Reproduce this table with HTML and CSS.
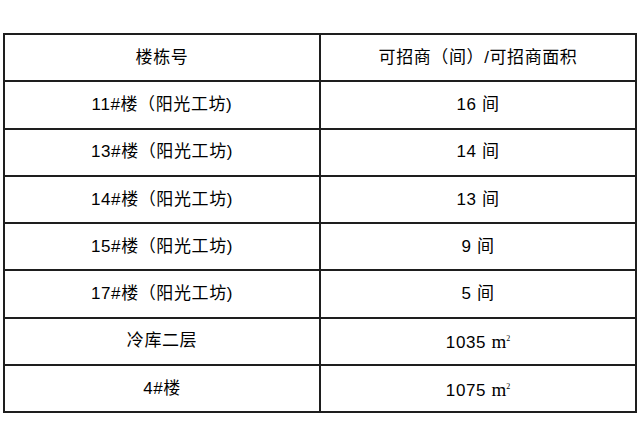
FILE: index.html
```html
<!DOCTYPE html>
<html lang="zh">
<head>
<meta charset="utf-8">
<link rel="stylesheet" href="styles.css">
</head>
<body>
<table class="grid">
  <tr><td>楼栋号</td><td>可招商（间）/可招商面积</td></tr>
  <tr><td>11#楼（阳光工坊)</td><td>16 间</td></tr>
  <tr><td>13#楼（阳光工坊)</td><td>14 间</td></tr>
  <tr><td>14#楼（阳光工坊)</td><td>13 间</td></tr>
  <tr><td>15#楼（阳光工坊)</td><td>9 间</td></tr>
  <tr><td>17#楼（阳光工坊)</td><td>5 间</td></tr>
  <tr><td>冷库二层</td><td>1035 <span class="unit">m<sup>2</sup></span></td></tr>
  <tr><td>4#楼</td><td>1075 <span class="unit">m<sup>2</sup></span></td></tr>
</table>
</body>
</html>
```
FILE: styles.css
```css
html, body {
  margin: 0;
  padding: 0;
  background: #fff;
}
body {
  padding: 33px 0 0 3px;
  font-family: "Liberation Sans", "Noto Sans CJK SC", sans-serif;
  color: #000;
}
.grid {
  border-collapse: collapse;
  width: 634px;
}
.grid td {
  border: 2px solid #1e1e1e;
  height: 45.3px;
  padding: 0;
  width: 50%;
  text-align: center;
  vertical-align: middle;
  font-size: 17px;
  letter-spacing: 0.6px;
  line-height: 20px;
}
.unit {
  font-family: "Liberation Serif", serif;
  font-size: 19px;
  letter-spacing: 0;
}
.unit sup {
  font-size: 8px;
  vertical-align: 7px;
}
```
